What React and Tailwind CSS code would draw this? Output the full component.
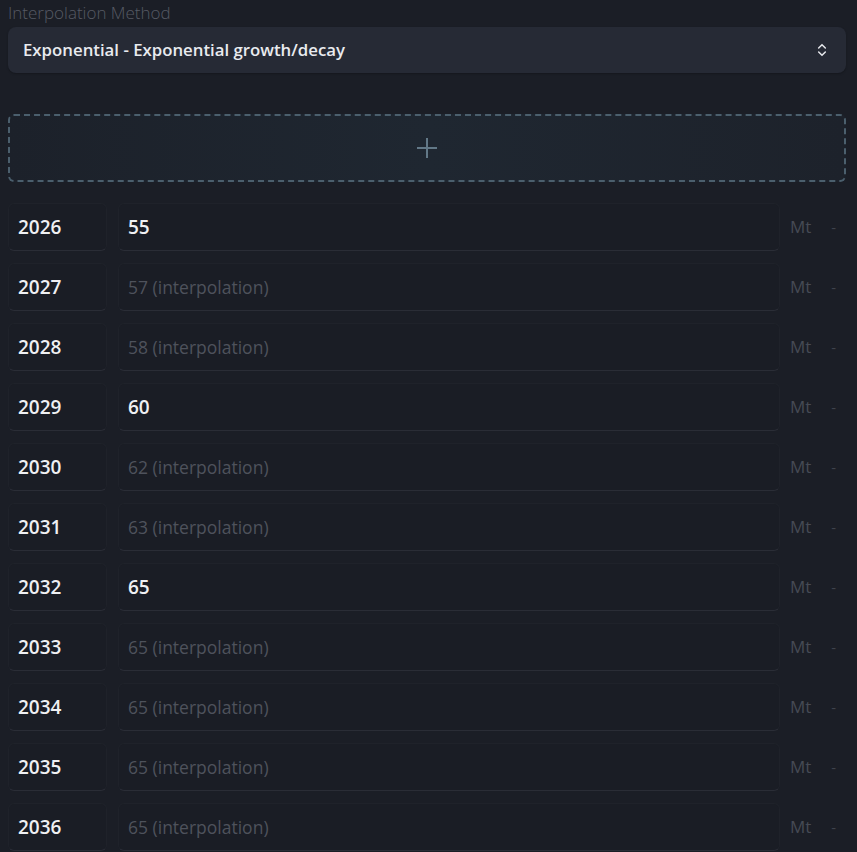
import React from "react";
import { ChevronsUpDown } from "lucide-react";

const rows = [
  { year: 2026, value: "55", set: true },
  { year: 2027, value: "57 (interpolation)" },
  { year: 2028, value: "58 (interpolation)" },
  { year: 2029, value: "60", set: true },
  { year: 2030, value: "62 (interpolation)" },
  { year: 2031, value: "63 (interpolation)" },
  { year: 2032, value: "65", set: true },
  { year: 2033, value: "65 (interpolation)" },
  { year: 2034, value: "65 (interpolation)" },
  { year: 2035, value: "65 (interpolation)" },
  { year: 2036, value: "65 (interpolation)" },
];

export default function App() {
  return (
    <div
      className="min-h-[852px] w-[857px] overflow-hidden bg-[#1b1e26] pl-2 pr-[11px] pb-2"
      style={{ fontFamily: '"Open Sans", "Noto Sans", sans-serif' }}
    >
      <div className="pt-[1px] text-[17px] font-light leading-[24px] text-[#565a64]">
        Interpolation Method
      </div>
      <div className="mt-[2px] flex h-[46px] items-center justify-between rounded-lg bg-[#262a35] pl-[15px] pr-[16px] shadow-[0_1px_2px_rgba(0,0,0,0.25)]">
        <span className="text-[16.8px] font-semibold text-[#e9ebef]">
          Exponential - Exponential growth/decay
        </span>
        <ChevronsUpDown size={16} strokeWidth={2.25} className="text-[#e6e8ec]" />
      </div>

      <div className="mt-[41px] flex h-[68px] items-center justify-center rounded-md border-2 border-dashed border-[#4b5f6d] bg-gradient-to-r from-[#1c212a] via-[#1f2731] to-[#1d222b]">
        <svg width="20" height="20" viewBox="0 0 20 20" shapeRendering="crispEdges">
          <rect x="9" y="0" width="2" height="20" fill="#627887" />
          <rect x="0" y="9" width="20" height="2" fill="#627887" />
        </svg>
      </div>

      <div className="mt-[21px] flex flex-col gap-3">
        {rows.map((r) => (
          <div key={r.year} className="flex h-[48px] items-center">
            <div className="flex h-full w-[99px] items-center rounded-md border border-[#1f222a] border-b-[#2a2d36] bg-[#1a1d25] pl-[9px] text-[19px] font-semibold text-[#eff0f3]">
              {r.year}
            </div>
            <div
              className={`ml-[11px] flex h-full w-[662px] items-center rounded-md border border-[#1f222a] border-b-[#2a2d36] bg-[#1a1d25] pl-[9px] ${
                r.set
                  ? "text-[19px] font-semibold text-[#eff0f3]"
                  : "text-[17.5px] text-[#4e525c]"
              }`}
            >
              {r.value}
            </div>
            <span className="ml-[10px] text-[17px] text-[#464a54]">Mt</span>
            <span className="ml-[20px] text-[15px] text-[#3f434c]">-</span>
          </div>
        ))}
      </div>
    </div>
  );
}
